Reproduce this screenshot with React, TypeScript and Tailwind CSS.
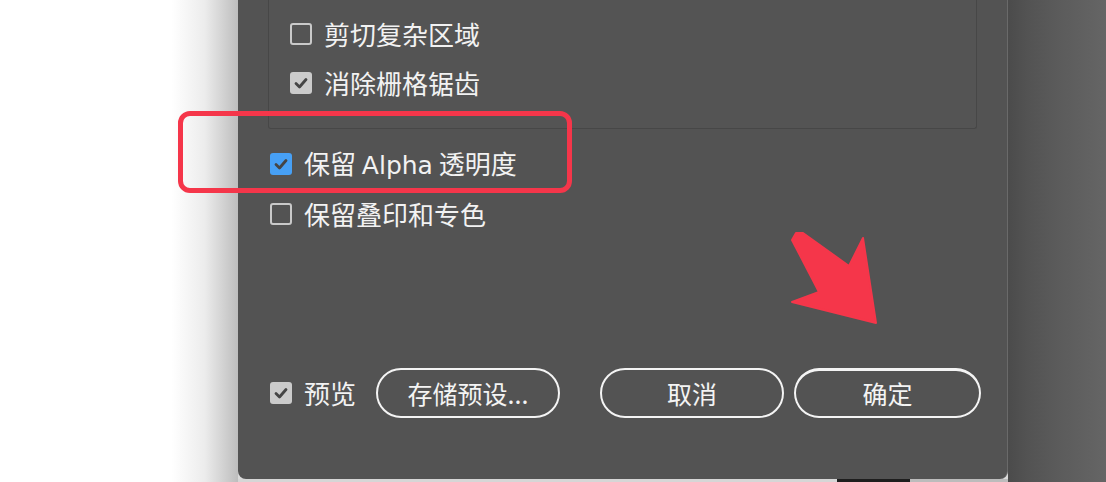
import React from 'react';

type BoxKind = 'off' | 'gray' | 'blue';

const Check: React.FC<{ kind: BoxKind }> = ({ kind }) => {
  if (kind === 'off') {
    return <span className="w-[22px] h-[22px] shrink-0 rounded-[3px] border-2 border-[#c9c9c9]" />;
  }
  return (
    <span
      className={`w-[22px] h-[22px] shrink-0 rounded-[3px] flex items-center justify-center ${
        kind === 'blue' ? 'bg-[#47a0f5]' : 'bg-[#cbcbcb]'
      }`}
    >
      <svg viewBox="0 0 22 22" className="w-[22px] h-[22px]">
        <path d="M6 11.5 L9.5 15 L16 7.5" fill="none" stroke="#454545" strokeWidth="2.8" strokeLinecap="round" strokeLinejoin="round" />
      </svg>
    </span>
  );
};

const Row: React.FC<{ kind: BoxKind; label: React.ReactNode; className?: string }> = ({ kind, label, className }) => (
  <div className={`flex items-center gap-[12px] shrink-0 ${className ?? ''}`}>
    <Check kind={kind} />
    <span className="text-[26px] leading-none text-[#f2f2f2] whitespace-nowrap">{label}</span>
  </div>
);

const PillButton: React.FC<{ label: string; className?: string }> = ({ label, className }) => (
  <button
    className={`h-[50px] shrink-0 rounded-full border-2 border-[#f4f4f4] text-[25px] leading-none text-[#f4f4f4] flex items-center justify-center ${className ?? ''}`}
  >
    {label}
  </button>
);

export default function App() {
  return (
    <div
      className="relative w-[1106px] h-[482px] overflow-hidden flex bg-[#dadada]"
      style={{ fontFamily: '"Noto Sans CJK SC", "Noto Sans", sans-serif' }}
    >
      {/* page behind the dialog */}
      <div className="w-[238px] h-full shrink-0 bg-[linear-gradient(to_right,#ffffff_72%,#ececec_86%,#bdbdbd)]" />

      <div className="w-[770px] shrink-0 flex flex-col">
        {/* dialog */}
        <div className="h-[479px] bg-[#535353] rounded-b-[8px] border-r border-[#6a6a6a] flex flex-col pl-[32px] pr-[10px]">
          {/* group box, top cut by the window */}
          <div className="-ml-[2px] w-[709px] h-[129px] border-x border-b border-[#474747] rounded-b-[3px] bg-[#545454] pl-[21px] pt-[21px] flex flex-col gap-[23px]">
            <Row kind="off" label="剪切复杂区域" />
            <Row kind="gray" label="消除栅格锯齿" />
          </div>

          <Row
            kind="blue"
            label={
              <>
                保留 <span style={{ fontFamily: '"DejaVu Sans", sans-serif' }} className="text-[25px]">Alpha</span> 透明度
              </>
            }
            className="mt-[21px]"
          />
          <Row kind="off" label="保留叠印和专色" className="mt-[23px]" />

          <div className="mt-[141px] flex items-center">
            <Row kind="gray" label="预览" />
            <PillButton label="存储预设..." className="ml-[20px] w-[184px]" />
            <PillButton label="取消" className="ml-[40px] w-[184px]" />
            <PillButton label="确定" className="ml-[10px] w-[187px] border-t-[3px]" />
          </div>
        </div>
        <div className="flex-1 flex">
          <div className="w-[599px] bg-[#d6d6d6]" />
          <div className="w-[73px] bg-[#1e1e1e]" />
          <div className="flex-1 bg-[#bcbcbc]" />
        </div>
      </div>

      {/* backdrop to the right */}
      <div className="flex-1 h-full bg-[linear-gradient(to_right,#4b4b4b,#535353_20%,#5c5c5c_55%,#656565)]" />

      {/* annotation: red frame */}
      <div className="absolute left-[178px] top-[111px] w-[394px] h-[82px] rounded-[12px] border-[5px] border-[#f5364a]" />

      {/* annotation: red arrow */}
      <svg className="absolute left-0 top-0 pointer-events-none" width="1106" height="482" viewBox="0 0 1106 482">
        <polygon
          points="792,240 796,233 803,233 849,266 863,238 876,323 792,302 819,292"
          fill="#f5364a"
          strokeLinejoin="round"
          stroke="#f5364a"
          strokeWidth="2"
        />
      </svg>
    </div>
  );
}
